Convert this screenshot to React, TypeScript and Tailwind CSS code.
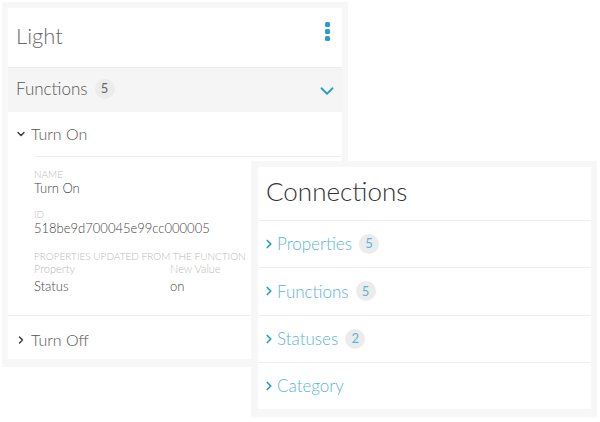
import { ChevronDown, ChevronRight } from "lucide-react";

const font = { fontFamily: "Lato, 'Open Sans', sans-serif" };

function Badge({ n, blue }: { n: number; blue?: boolean }) {
  return (
    <span
      className={`ml-[7px] inline-flex h-[20px] w-[20px] items-center justify-center rounded-full bg-[#ececec] text-[13px] font-normal ${
        blue ? "text-[#5bb5d8]" : "text-[#666]"
      }`}
    >
      {n}
    </span>
  );
}

function Kebab() {
  return (
    <div className="flex flex-col gap-[1.5px]">
      <span className="h-[5.5px] w-[5.5px] rounded-[1.5px] bg-[#2a9ccb]" />
      <span className="h-[5.5px] w-[5.5px] rounded-[1.5px] bg-[#2a9ccb]" />
      <span className="h-[5.5px] w-[5.5px] rounded-[1.5px] bg-[#2a9ccb]" />
    </div>
  );
}

function Label({ children }: { children: React.ReactNode }) {
  return <div className="text-[10px] uppercase leading-[12px] text-[#bbb]">{children}</div>;
}

function Value({ children }: { children: React.ReactNode }) {
  return <div className="text-[13px] leading-[17px] text-[#444]">{children}</div>;
}

function LightCard() {
  return (
    <div className="absolute left-[2px] top-[2px] h-[365px] w-[346px] bg-[#f7f7f7] px-[6px] pb-[8px] pt-[6px] font-light">
      <div className="flex h-full flex-col bg-white">
        <div className="flex h-[59px] items-center justify-between pl-[8px] pr-[12px]">
          <span className="pb-[4px] text-[22px] text-[#6a6a6a]">Light</span>
          <div className="-mt-[12px]">
            <Kebab />
          </div>
        </div>
        <div className="flex h-[45px] items-center justify-between border-t border-[#ececec] bg-[#f5f5f5] pb-[3px] pl-[8px] pr-[4px]">
          <div className="flex items-center">
            <span className="text-[17px] text-[#555]">Functions</span>
            <Badge n={5} />
          </div>
          <ChevronDown size={22} strokeWidth={2} className="mt-[4px] text-[#2a9ccb]" />
        </div>
        <div className="flex h-[44px] items-center pl-[7px]">
          <ChevronDown size={12} strokeWidth={2.75} className="text-[#333]" />
          <span className="ml-[4px] text-[16px] text-[#555]">Turn On</span>
        </div>
        <div className="ml-[26px] border-t border-[#f0f0f0] pb-[20px] pt-[11px]">
          <Label>Name</Label>
          <Value>Turn On</Value>
          <div className="mt-[11px]">
            <Label>ID</Label>
            <Value>518be9d700045e99cc000005</Value>
          </div>
          <div className="mt-[13px]">
            <Label>Properties updated from the function</Label>
            <div className="grid grid-cols-[136px_1fr]">
              <div className="text-[11px] leading-[13px] text-[#bbb]">Property</div>
              <div className="text-[11px] leading-[13px] text-[#bbb]">New Value</div>
              <div className="mt-[3px] text-[13px] leading-[17px] text-[#444]">Status</div>
              <div className="mt-[3px] text-[13px] leading-[17px] text-[#444]">on</div>
            </div>
          </div>
        </div>
        <div className="flex flex-1 items-center border-t border-[#f0f0f0] pl-[7px] pt-[5px]">
          <ChevronRight size={12} strokeWidth={2.75} className="text-[#333]" />
          <span className="ml-[4px] text-[16px] text-[#555]">Turn Off</span>
        </div>
      </div>
    </div>
  );
}

const connections: { name: string; count?: number }[] = [
  { name: "Properties", count: 5 },
  { name: "Functions", count: 5 },
  { name: "Statuses", count: 2 },
  { name: "Category" },
];

function ConnectionsCard() {
  return (
    <div className="absolute left-[251px] top-[161px] h-[256px] w-[346px] bg-[#f7f7f7] pb-[8px] pl-[7px] pr-[6px] pt-[6px] font-light">
      <div className="flex h-full flex-col bg-white">
        <div className="flex h-[53px] items-center pb-[4px] pl-[8px]">
          <span className="text-[26px] text-[#333]">Connections</span>
        </div>
        {connections.map((c) => (
          <div
            key={c.name}
            className="flex flex-1 items-center border-t border-[#efefef] pl-[6px]"
          >
            <ChevronRight size={14} strokeWidth={3} className="-ml-[2px] text-[#2a9ccb]" />
            <span className="ml-[1px] text-[17px] text-[#5bb5d8]">{c.name}</span>
            {c.count !== undefined && <Badge n={c.count} blue />}
          </div>
        ))}
      </div>
    </div>
  );
}

export default function App() {
  return (
    <div className="relative h-[422px] w-[600px] overflow-hidden bg-white" style={font}>
      <LightCard />
      <ConnectionsCard />
    </div>
  );
}
